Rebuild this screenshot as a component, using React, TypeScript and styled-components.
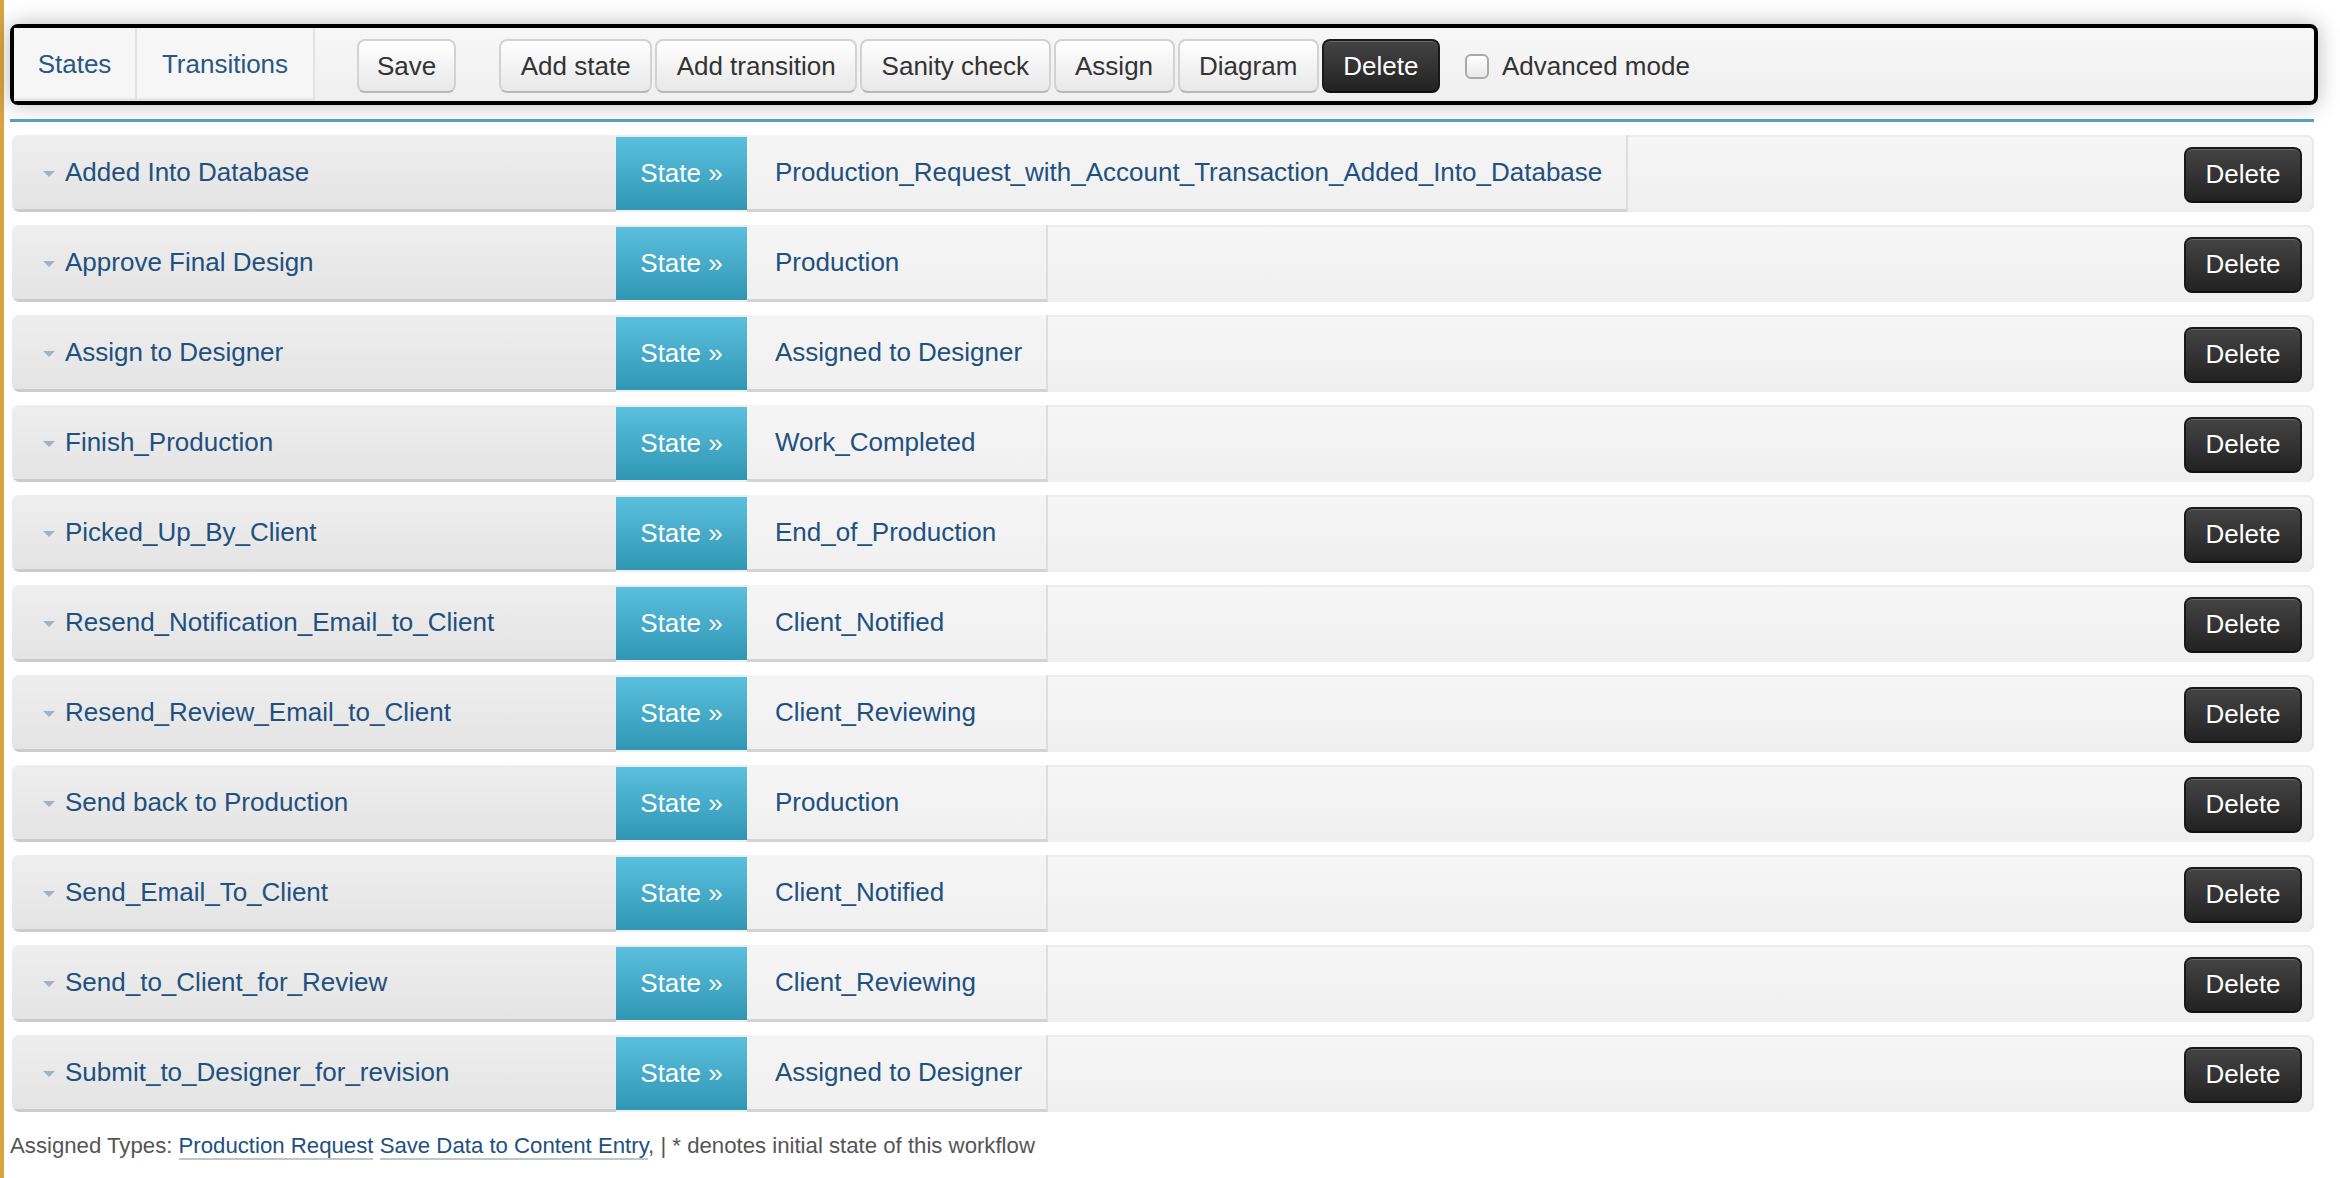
import React from "react";
import styled, { createGlobalStyle } from "styled-components";

const Global = createGlobalStyle`
  html, body { margin: 0; padding: 0; background: #fff; }
  body {
    font-family: "Liberation Sans", Arial, sans-serif;
    font-size: 26px;
    color: #333;
  }
`;

const Page = styled.div`
  border-left: 4px solid #d9a33f;
  min-height: 1178px;
  box-sizing: border-box;
  padding: 24px 26px 0 6px;
`;

const Toolbar = styled.div`
  display: flex;
  align-items: stretch;
  height: 81px;
  box-sizing: border-box;
  margin-right: -4px;
  border: 4px solid #000;
  border-radius: 8px;
  background: linear-gradient(#f7f7f7, #efefef);
  box-shadow: 0 0 22px rgba(0, 0, 0, 0.28);
`;

const Tab = styled.a<{ $w: number }>`
  display: flex;
  align-items: center;
  justify-content: center;
  width: ${(p) => p.$w}px;
  box-sizing: border-box;
  color: #2a5784;
  text-decoration: none;
  background: #f6f6f6;
  border-right: 2px solid #e2e2e2;
  border-bottom: 3px solid #e6e6e6;
  padding-top: 2px;
`;

const Btn = styled.button<{ $dark?: boolean }>`
  font-family: "Liberation Sans", Arial, sans-serif;
  font-size: 26px;
  height: 54px;
  padding: 0 19.5px;
  border-radius: 8px;
  border: 2px solid ${(p) => (p.$dark ? "#1a1a1a" : "#d2d2d2")};
  border-bottom-color: ${(p) => (p.$dark ? "#111" : "#b8b8b8")};
  color: ${(p) => (p.$dark ? "#fff" : "#333")};
  background: ${(p) =>
    p.$dark ? "linear-gradient(#444, #222)" : "linear-gradient(#ffffff, #e8e8e8)"};
  box-shadow: inset 0 1px 0 rgba(255, 255, 255, 0.2);
  cursor: pointer;
`;

const SaveBtn = styled(Btn)`
  padding: 0 18px;
`;

const SaveWrap = styled.div`
  display: flex;
  align-items: center;
  margin-left: 42px;
  padding-top: 3px;
`;

const Group = styled.div`
  display: flex;
  align-items: center;
  gap: 3px;
  margin-left: 43px;
  padding-top: 3px;
`;

const Check = styled.label`
  display: flex;
  align-items: center;
  margin-left: 25px;
  padding-top: 4px;
  color: #333;
  gap: 13px;
`;

const Box = styled.span`
  display: inline-block;
  width: 20px;
  height: 21px;
  border: 2px solid #a9a9a9;
  border-radius: 6px;
  background: linear-gradient(#fff, #e9e9e9);
`;

const BlueLine = styled.div`
  height: 3px;
  background: #5a9fbe;
  margin: 14px 0 13px 0;
`;

const Row = styled.div`
  display: flex;
  align-items: stretch;
  height: 77px;
  margin: 0 0 13px 2px;
  border-radius: 8px;
  overflow: hidden;
  background: linear-gradient(#f6f6f6, #efefef);
  box-shadow: inset 0 2px 0 #ececec, inset -2px 0 0 #e8e8e8;
`;

const LabelCell = styled.div`
  width: 604px;
  flex: none;
  display: flex;
  align-items: center;
  box-sizing: border-box;
  padding-left: 31px;
  background: linear-gradient(#eeeeee, #e4e4e4);
  border-bottom: 3px solid #cbcbcb;
  color: #21507f;
`;

const Caret = styled.span`
  width: 0;
  height: 0;
  border-left: 6px solid transparent;
  border-right: 6px solid transparent;
  border-top: 6px solid #9db4c6;
  margin-right: 10px;
  margin-top: 4px;
`;

const Badge = styled.div`
  width: 131px;
  flex: none;
  display: flex;
  align-items: center;
  justify-content: center;
  margin: 2px 0 2px;
  background: linear-gradient(#5bc0de, #2f96b4);
  color: #fff;
`;

const Target = styled.div`
  min-width: 301px;
  flex: none;
  display: flex;
  align-items: center;
  box-sizing: border-box;
  padding: 0 24px 0 28px;
  background: linear-gradient(#f5f5f5, #f0f0f0);
  border-right: 2px solid #dedede;
  border-bottom: 3px solid #d3d3d3;
  color: #21507f;
`;

const Spacer = styled.div`
  flex: 1;
`;

const RowDelete = styled(Btn)`
  align-self: center;
  height: 56px;
  width: 118px;
  padding: 0;
  margin: 2px 12px 0 0;
`;

const Footer = styled.div`
  font-size: 22.2px;
  color: #555;
  margin-top: 21px;
  padding-left: 0;
`;

const FLink = styled.a`
  color: #21507f;
  text-decoration: none;
  border-bottom: 2px solid #c4c4c4;
`;

const rows: [string, string][] = [
  ["Added Into Database", "Production_Request_with_Account_Transaction_Added_Into_Database"],
  ["Approve Final Design", "Production"],
  ["Assign to Designer", "Assigned to Designer"],
  ["Finish_Production", "Work_Completed"],
  ["Picked_Up_By_Client", "End_of_Production"],
  ["Resend_Notification_Email_to_Client", "Client_Notified"],
  ["Resend_Review_Email_to_Client", "Client_Reviewing"],
  ["Send back to Production", "Production"],
  ["Send_Email_To_Client", "Client_Notified"],
  ["Send_to_Client_for_Review", "Client_Reviewing"],
  ["Submit_to_Designer_for_revision", "Assigned to Designer"],
];

export default function App() {
  return (
    <>
      <Global />
      <Page>
        <Toolbar>
          <Tab $w={123}>States</Tab>
          <Tab $w={178}>Transitions</Tab>
          <SaveWrap>
            <SaveBtn>Save</SaveBtn>
          </SaveWrap>
          <Group>
            <Btn>Add state</Btn>
            <Btn>Add transition</Btn>
            <Btn>Sanity check</Btn>
            <Btn>Assign</Btn>
            <Btn>Diagram</Btn>
            <Btn $dark>Delete</Btn>
          </Group>
          <Check>
            <Box />
            Advanced mode
          </Check>
        </Toolbar>
        <BlueLine />
        {rows.map(([name, target], i) => (
          <Row key={i}>
            <LabelCell>
              <Caret />
              {name}
            </LabelCell>
            <Badge>State »</Badge>
            <Target>{target}</Target>
            <Spacer />
            <RowDelete $dark>Delete</RowDelete>
          </Row>
        ))}
        <Footer>
          Assigned Types: <FLink>Production Request</FLink>{" "}
          <FLink>Save Data to Content Entry</FLink>, | * denotes initial state of this workflow
        </Footer>
      </Page>
    </>
  );
}
